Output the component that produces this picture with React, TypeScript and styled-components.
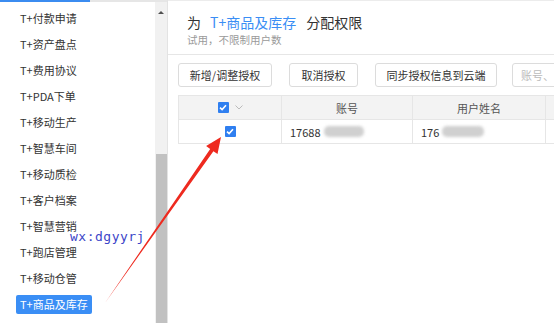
import React from "react";
import styled, { createGlobalStyle } from "styled-components";

const Global = createGlobalStyle`
  html, body { margin: 0; padding: 0; background: #fff; }
  body { font-family: "Microsoft YaHei", "Noto Sans CJK SC", "Liberation Sans", sans-serif; font-size: 11px; color: #333; }
  * { box-sizing: border-box; }
`;

const Page = styled.div`
  position: relative;
  display: flex;
  width: 554px;
  height: 323px;
  overflow: hidden;
`;

const LeftCol = styled.div`
  display: flex;
  flex-direction: column;
  width: 168px;
  border-right: 1px solid #e3e3e3;
  flex-shrink: 0;
`;

const TopLine = styled.div`
  height: 2px;
  background: linear-gradient(to right, #3b8cf0 0, #3b8cf0 90px, #e6e6e6 90px, #e6e6e6 100%);
`;

const LeftBody = styled.div`
  flex: 1;
  display: flex;
  min-height: 0;
`;

const Menu = styled.ul`
  list-style: none;
  margin: 0;
  padding: 3px 0 0 16px;
  width: 155px;
`;

const MenuItem = styled.li`
  height: 26px;
  display: flex;
  align-items: center;
`;

const MenuLabel = styled.span<{ $active?: boolean }>`
  display: inline-flex;
  align-items: center;
  height: 19px;
  padding: 0 4px;
  border-radius: 2px;
  font-size: 11px;
  color: ${(p) => (p.$active ? "#fff" : "#333")};
  background: ${(p) => (p.$active ? "#3a8ef5" : "transparent")};
`;

const Scrollbar = styled.div`
  width: 12px;
  background: #f1f1f1;
  display: flex;
  flex-direction: column;
  justify-content: space-between;
  align-items: center;
`;

const ScrollArrow = styled.div`
  margin-top: 9px;
  width: 0;
  height: 0;
  border-left: 3px solid transparent;
  border-right: 3px solid transparent;
  border-bottom: 3px solid #505050;
`;

const Thumb = styled.div`
  width: 11px;
  height: 169px;
  background: #c1c1c1;
`;

const Main = styled.div`
  flex: 1;
  display: flex;
  flex-direction: column;
  min-width: 0;
  border-top: 1px solid #ececec;
`;

const Header = styled.div`
  height: 54px;
  padding: 12px 19px 0;
  border-bottom: 1px solid #e6e6e6;
`;

const Title = styled.div`
  font-size: 14px;
  color: #333;
  line-height: 18px;
  display: flex;
  gap: 9px;
`;

const Accent = styled.span`
  color: #3a8ef5;
  margin-right: 1px;
`;

const Sub = styled.div`
  margin-top: 1px;
  font-size: 10.5px;
  color: #9a9a9a;
`;

const Toolbar = styled.div`
  display: flex;
  gap: 17px;
  margin: 8px 0 0 10px;
`;

const Button = styled.button<{ $w: number }>`
  width: ${(p) => p.$w}px;
  height: 24px;
  padding: 0;
  border: 1px solid #dcdcdc;
  border-radius: 3px;
  background: #fff;
  font-family: inherit;
  font-size: 11px;
  color: #333;
  flex-shrink: 0;
`;

const Search = styled.div`
  width: 80px;
  height: 24px;
  margin-left: -2px;
  border: 1px solid #dcdcdc;
  border-radius: 3px;
  padding-left: 8px;
  display: flex;
  align-items: center;
  color: #bbb;
  font-size: 11px;
  flex-shrink: 0;
`;

const Table = styled.div`
  margin: 8px 0 0 10px;
  display: grid;
  grid-template-columns: 103px 131px 133px 100px;
  width: 467px;
  border-top: 1px solid #e6e6e6;
  border-left: 1px solid #e6e6e6;
`;

const Cell = styled.div<{ $head?: boolean; $center?: boolean }>`
  height: 24px;
  display: flex;
  align-items: center;
  justify-content: ${(p) => (p.$center ? "center" : "flex-start")};
  padding: 0 8px;
  background: ${(p) => (p.$head ? "#f3f3f3" : "#fff")};
  border-right: 1px solid #e6e6e6;
  border-bottom: 1px solid #e6e6e6;
  font-size: 11px;
  color: ${(p) => (p.$head ? "#555" : "#333")};
  white-space: nowrap;
  overflow: hidden;
`;

const Check = styled.span`
  width: 11px;
  height: 11px;
  border-radius: 1px;
  background: #2f7ff0;
  display: inline-flex;
  align-items: center;
  justify-content: center;
`;

const Chevron = styled.svg`
  margin-left: 6px;
`;

const Blur = styled.span<{ $w: number }>`
  display: inline-block;
  width: ${(p) => p.$w}px;
  height: 11px;
  margin-left: 3px;
  border-radius: 5px;
  background: #d0d0d0;
  filter: blur(1.5px);
`;

const Watermark = styled.div`
  position: absolute;
  left: 70px;
  top: 229px;
  font-family: "DejaVu Sans Mono", "Liberation Mono", monospace;
  font-size: 13px;
  color: #3c45c8;
  letter-spacing: 0.5px;
`;

const ArrowOverlay = styled.svg`
  position: absolute;
  left: 0;
  top: 0;
  pointer-events: none;
`;

const Tick = () => (
  <svg width="8" height="7" viewBox="0 0 8 7">
    <path d="M1 3.6 L3.1 5.6 L7 1.2" fill="none" stroke="#fff" strokeWidth="1.6" />
  </svg>
);

const items = [
  "T+付款申请",
  "T+资产盘点",
  "T+费用协议",
  "T+PDA下单",
  "T+移动生产",
  "T+智慧车间",
  "T+移动质检",
  "T+客户档案",
  "T+智慧营销",
  "T+跑店管理",
  "T+移动仓管",
  "T+商品及库存",
];

export default function App() {
  return (
    <Page>
      <Global />
      <LeftCol>
        <TopLine />
        <LeftBody>
          <Menu>
            {items.map((t, i) => (
              <MenuItem key={t}>
                <MenuLabel $active={i === items.length - 1}>{t}</MenuLabel>
              </MenuItem>
            ))}
          </Menu>
          <Scrollbar>
            <ScrollArrow />
            <Thumb />
          </Scrollbar>
        </LeftBody>
      </LeftCol>
      <Main>
        <Header>
          <Title>
            <span>为</span>
            <Accent>T+商品及库存</Accent>
            <span>分配权限</span>
          </Title>
          <Sub>试用，不限制用户数</Sub>
        </Header>
        <Toolbar>
          <Button $w={94}>新增/调整授权</Button>
          <Button $w={69}>取消授权</Button>
          <Button $w={122}>同步授权信息到云端</Button>
          <Search>账号、</Search>
        </Toolbar>
        <Table>
          <Cell $head $center>
            <Check><Tick /></Check>
            <Chevron width="8" height="5" viewBox="0 0 8 5">
              <path d="M0.5 0.5 L4 4 L7.5 0.5" fill="none" stroke="#bbb" strokeWidth="1" />
            </Chevron>
          </Cell>
          <Cell $head $center>账号</Cell>
          <Cell $head $center>用户姓名</Cell>
          <Cell $head $center></Cell>
          <Cell $center>
            <Check><Tick /></Check>
          </Cell>
          <Cell>17688<Blur $w={40} /></Cell>
          <Cell>176<Blur $w={42} /></Cell>
          <Cell>1</Cell>
        </Table>
      </Main>
      <Watermark>wx:dgyyrj</Watermark>
      <ArrowOverlay width="554" height="323" viewBox="0 0 554 323">
        <polygon
          points="105,303 210.2,148.9 206.1,146.1 221,137 217.5,154.1 213.4,151.2"
          fill="#ee2a1f"
        />
      </ArrowOverlay>
    </Page>
  );
}
